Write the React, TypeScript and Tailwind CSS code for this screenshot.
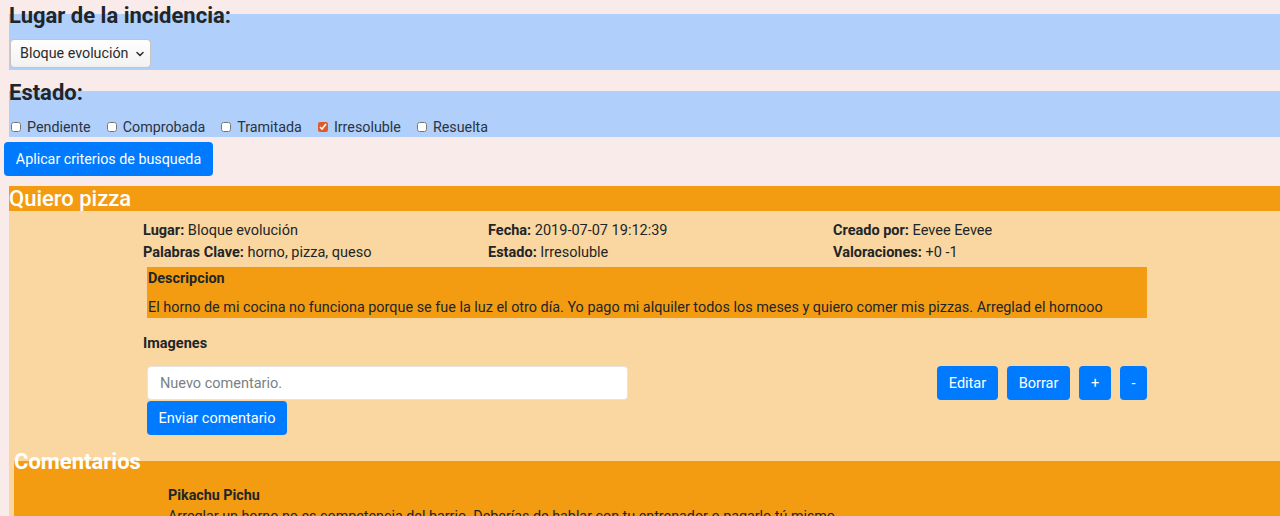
import React from 'react';
import { ChevronDown } from 'lucide-react';

const estados = [
  { label: 'Pendiente', checked: false },
  { label: 'Comprobada', checked: false },
  { label: 'Tramitada', checked: false },
  { label: 'Irresoluble', checked: true },
  { label: 'Resuelta', checked: false },
];

function Info({ label, value }: { label: string; value: string }) {
  return (
    <div className="leading-[22px] whitespace-nowrap">
      <span className="font-bold">{label}:</span> {value}
    </div>
  );
}

export default function App() {
  return (
    <div className="min-h-screen bg-[#f9ebea] text-[#212529] font-['Roboto',sans-serif] text-[14.5px] overflow-hidden">
      {/* Filtros */}
      <div className="pl-[9px] pt-[14px]">
        <div className="flex flex-col items-start bg-[#b0d0fb] h-[56px]">
          <h2 className="-mt-[11px] text-[22px] leading-[26px] font-bold">Lugar de la incidencia:</h2>
          <div className="mt-[10px] ml-[1px] flex items-center gap-[5px] h-[29px] w-[141px] pl-[9px] pr-[8px] pt-[1px] whitespace-nowrap rounded-[4px] border border-[#c4c4c4] bg-gradient-to-b from-white to-[#f1f1f1] text-[#2b2b2b] text-[14.3px]">
            <span>Bloque evolución</span>
            <ChevronDown className="w-[12px] h-[12px] shrink-0" strokeWidth={3} />
          </div>
        </div>

        <div className="mt-[21px] flex flex-col items-start bg-[#b0d0fb] h-[46px]">
          <h2 className="-mt-[11px] text-[22px] leading-[26px] font-bold">Estado:</h2>
          <div className="mt-[11px] flex items-center leading-[20px] text-[14.3px]">
            {estados.map((e) => (
              <label key={e.label} className="flex items-center gap-[6px] ml-[2px] mr-[14px] text-[#2c3440]">
                <input
                  type="checkbox"
                  defaultChecked={e.checked}
                  className="w-[10px] h-[10px] m-0 accent-[#e0592b]"
                />
                <span>{e.label}</span>
              </label>
            ))}
          </div>
        </div>
      </div>

      <button className="mt-[5px] ml-[4px] h-[34px] w-[209px] pt-[1px] rounded-[4px] bg-[#007bff] text-white text-[14.3px] whitespace-nowrap">
        Aplicar criterios de busqueda
      </button>

      {/* Incidencia */}
      <div className="mt-[10px] ml-[9px]">
        <div className="h-[25px] bg-[#f39c12] text-white text-[22px] leading-[25px] font-medium">Quiero pizza</div>
        <div className="bg-[#fad7a0] pl-[5px] pb-[20px]">
          <div className="pl-[129px]">
            <div className="pt-[9px] grid grid-cols-[345px_345px_1fr]">
              <Info label="Lugar" value="Bloque evolución" />
              <Info label="Fecha" value="2019-07-07 19:12:39" />
              <Info label="Creado por" value="Eevee Eevee" />
              <Info label="Palabras Clave" value="horno, pizza, queso" />
              <Info label="Estado" value="Irresoluble" />
              <Info label="Valoraciones" value="+0 -1" />
            </div>

            <div className="mt-[3px] ml-[4px] w-[1000px] h-[51px] bg-[#f39c12] flex flex-col pl-[1px] text-[14.4px]">
              <h4 className="mt-[1px] font-bold leading-[21px]">Descripcion</h4>
              <p className="mt-[8px] leading-[21px] whitespace-nowrap">
                El horno de mi cocina no funciona porque se fue la luz el otro día. Yo pago mi alquiler todos los meses y quiero comer mis pizzas. Arreglad el hornooo
              </p>
            </div>

            <h4 className="mt-[15px] font-bold leading-[21px]">Imagenes</h4>

            <div className="mt-[12px] ml-[4px] w-[1000px] flex justify-between items-start">
              <div className="flex flex-col items-start gap-[1px]">
                <input
                  type="text"
                  placeholder="Nuevo comentario."
                  className="w-[481px] h-[34px] px-[12px] pt-[1px] rounded-[4px] bg-white border border-[#e8e4dc] placeholder:text-[#7a7f85] outline-none"
                />
                <button className="h-[34px] w-[140px] pt-[1px] rounded-[4px] bg-[#007bff] text-white">Enviar comentario</button>
              </div>
              <div className="flex gap-[9px]">
                <button className="h-[34px] w-[61px] pt-[1px] rounded-[4px] bg-[#007bff] text-white">Editar</button>
                <button className="h-[34px] w-[63px] pt-[1px] rounded-[4px] bg-[#007bff] text-white">Borrar</button>
                <button className="h-[34px] w-[32px] pt-[1px] rounded-[4px] bg-[#007bff] text-white">+</button>
                <button className="h-[34px] w-[27px] pt-[1px] rounded-[4px] bg-[#007bff] text-white">-</button>
              </div>
            </div>
          </div>

          {/* Comentarios */}
          <div className="mt-[26px] bg-[#f39c12] flex flex-col items-start h-[80px]">
            <h3 className="-mt-[12px] text-[22px] leading-[26px] font-bold text-white">Comentarios</h3>
            <div className="mt-[10px] pl-[154px] text-[14.3px]">
              <h4 className="font-bold leading-[21px]">Pikachu Pichu</h4>
              <p className="leading-[21px] whitespace-nowrap">
                Arreglar un horno no es competencia del barrio. Deberías de hablar con tu entrenador o pagarlo tú mismo.
              </p>
            </div>
          </div>
        </div>
      </div>
    </div>
  );
}
